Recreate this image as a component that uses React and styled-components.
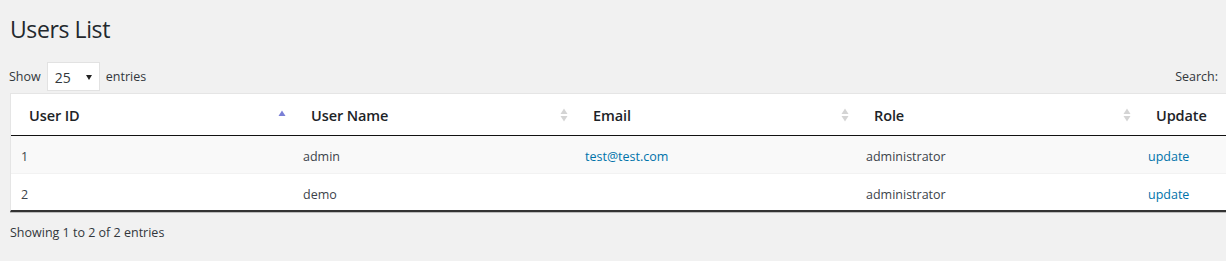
import React from "react";
import styled, { createGlobalStyle } from "styled-components";

const GlobalStyle = createGlobalStyle`
  html, body {
    margin: 0;
    padding: 0;
    background: #f1f1f1;
    overflow: hidden;
  }
  body {
    font-family: "Open Sans", "Noto Sans", sans-serif;
    color: #32373c;
  }
`;

const Page = styled.div`
  width: 1226px;
  height: 261px;
  overflow: hidden;
  padding-left: 10px;
  box-sizing: border-box;
`;

const Title = styled.h1`
  margin: 0;
  padding-top: 15px;
  font-size: 23px;
  font-weight: 400;
  line-height: 29px;
  color: #23282d;
  letter-spacing: -0.4px;
`;

const Controls = styled.div`
  display: flex;
  justify-content: space-between;
  align-items: flex-end;
  margin-top: 18px;
  padding-right: 8px;
  font-size: 12.5px;
`;

const Length = styled.label`
  display: flex;
  align-items: center;
  gap: 6px;
  margin-left: -1px;
`;

const Select = styled.div`
  width: 53px;
  height: 29px;
  box-sizing: border-box;
  background: #fff;
  border: 1px solid #e2e2e2;
  display: flex;
  align-items: center;
  justify-content: space-between;
  padding: 2px 7px 0 7px;
  font-size: 14px;
  color: #32373c;

  &::after {
    content: "";
    border-left: 3px solid transparent;
    border-right: 3px solid transparent;
    border-top: 5px solid #222;
    margin-top: -1px;
  }
`;

const Search = styled.div`
  padding-bottom: 6px;
`;

const Table = styled.table`
  margin-top: 2px;
  width: 1410px;
  table-layout: fixed;
  border-collapse: separate;
  border-spacing: 0;
  background: #fff;
  border-left: 1px solid #e5e5e5;
  border-top: 1px solid #e5e5e5;
  border-bottom: 2px solid #333;
  box-shadow: 0 1px 0 #bbb;
`;

const Th = styled.th`
  position: relative;
  text-align: left;
  padding: 11px 18px 10px;
  height: 20px;
  font-size: 14.5px;
  font-weight: 600;
  color: #1d2327;
  border-bottom: 1px solid #111;
  letter-spacing: -0.1px;
`;

const SortIcon = styled.svg`
  position: absolute;
  right: 6px;
  top: 50%;
  transform: translateY(-50%);
`;

const Row = styled.tr`
  background: ${(p) => (p.$odd ? "#f9f9f9" : "#fff")};
`;

const Td = styled.td`
  padding: 10px 10px ${(p) => (p.$last ? "6px" : "7px")};
  height: 20px;
  font-size: 12.5px;
  color: #3c434a;
  border-top: ${(p) => (p.$first ? "none" : "1px solid #f2f2f2")};
`;

const Link = styled.a`
  color: #0073aa;
  text-decoration: none;
`;

const Info = styled.div`
  margin-top: 12px;
  font-size: 12.5px;
  color: #32373c;
`;

const SortAsc = () => (
  <SortIcon width="10" height="16" viewBox="0 0 10 16">
    <path d="M1.5 9 L5 3.5 L8.5 9 Z" fill="#7a7fd6" />
  </SortIcon>
);

const SortBoth = () => (
  <SortIcon width="10" height="16" viewBox="0 0 10 16">
    <path d="M1.5 7 L5 1.5 L8.5 7 Z" fill="#d4d4d4" />
    <path d="M1.5 9 L5 14.5 L8.5 9 Z" fill="#d4d4d4" />
  </SortIcon>
);

const columns = [
  { label: "User ID", sort: "asc" },
  { label: "User Name", sort: "both" },
  { label: "Email", sort: "both" },
  { label: "Role", sort: "both" },
  { label: "Update", sort: "both" },
];

const users = [
  { id: 1, name: "admin", email: "test@test.com", role: "administrator" },
  { id: 2, name: "demo", email: "", role: "administrator" },
];

export default function App() {
  return (
    <>
      <GlobalStyle />
      <Page>
        <Title>Users List</Title>
        <Controls>
          <Length>
            Show <Select>25</Select> entries
          </Length>
          <Search>Search:</Search>
        </Controls>
        <Table>
          <colgroup>
            <col style={{ width: 282 }} />
            <col style={{ width: 282 }} />
            <col style={{ width: 281 }} />
            <col style={{ width: 282 }} />
            <col style={{ width: 282 }} />
          </colgroup>
          <thead>
            <tr>
              {columns.map((c) => (
                <Th key={c.label}>
                  {c.label}
                  {c.sort === "asc" ? <SortAsc /> : <SortBoth />}
                </Th>
              ))}
            </tr>
          </thead>
          <tbody>
            {users.map((u, i) => {
              const first = i === 0;
              const last = i === users.length - 1;
              return (
                <Row key={u.id} $odd={i % 2 === 0}>
                  <Td $first={first} $last={last}>{u.id}</Td>
                  <Td $first={first} $last={last}>{u.name}</Td>
                  <Td $first={first} $last={last}>
                    {u.email && <Link href="#">{u.email}</Link>}
                  </Td>
                  <Td $first={first} $last={last}>{u.role}</Td>
                  <Td $first={first} $last={last}>
                    <Link href="#">update</Link>
                  </Td>
                </Row>
              );
            })}
          </tbody>
        </Table>
        <Info>Showing 1 to 2 of 2 entries</Info>
      </Page>
    </>
  );
}
